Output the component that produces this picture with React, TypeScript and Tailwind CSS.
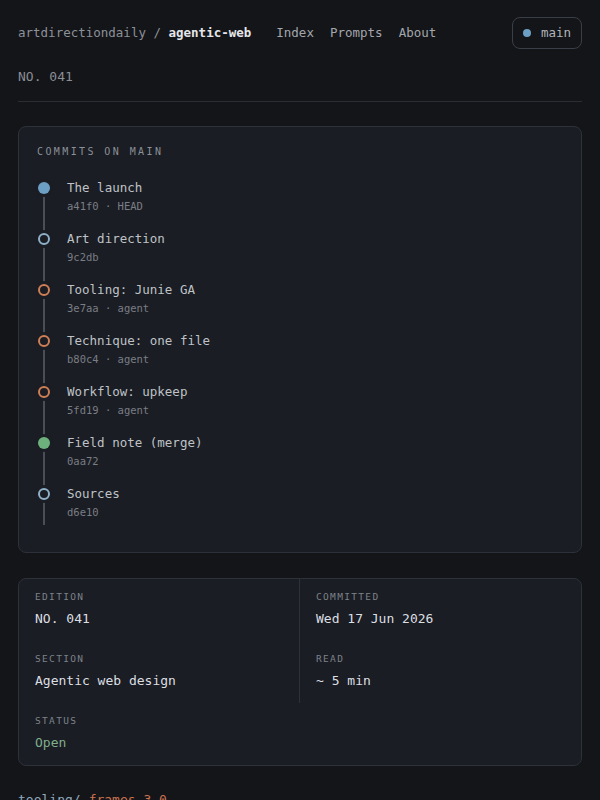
import React from "react";

const mono = { fontFamily: '"DejaVu Sans Mono", "Liberation Mono", monospace' };

type Commit = { title: string; sub: string; kind: "head" | "blue" | "orange" | "green" };

const commits: Commit[] = [
  { title: "The launch", sub: "a41f0 · HEAD", kind: "head" },
  { title: "Art direction", sub: "9c2db", kind: "blue" },
  { title: "Tooling: Junie GA", sub: "3e7aa · agent", kind: "orange" },
  { title: "Technique: one file", sub: "b80c4 · agent", kind: "orange" },
  { title: "Workflow: upkeep", sub: "5fd19 · agent", kind: "orange" },
  { title: "Field note (merge)", sub: "0aa72", kind: "green" },
  { title: "Sources", sub: "d6e10", kind: "blue" },
];

function Dot({ kind }: { kind: Commit["kind"] }) {
  if (kind === "head")
    return <div className="relative z-10 mt-[3px] h-[12px] w-[12px] shrink-0 rounded-full bg-[#6d9fc4] ring-[3px] ring-[#1a1d23]" />;
  if (kind === "green")
    return <div className="relative z-10 mt-[3px] h-[12px] w-[12px] shrink-0 rounded-full bg-[#6db27c] ring-[3px] ring-[#1a1d23]" />;
  if (kind === "orange")
    return <div className="relative z-10 mt-[3px] h-[12px] w-[12px] shrink-0 rounded-full border-2 border-[#cf7f55] bg-[#1a1d23] ring-[3px] ring-[#1a1d23]" />;
  return <div className="relative z-10 mt-[3px] h-[12px] w-[12px] shrink-0 rounded-full border-2 border-[#8fb0c8] bg-[#1a1d23] ring-[3px] ring-[#1a1d23]" />;
}

function Cell({ label, value, valueClass, border }: { label: string; value: string; valueClass?: string; border?: boolean }) {
  return (
    <div className={"px-4 pt-[12px] pb-[13px] " + (border ? "border-r border-[#2d3139]" : "")}>
      <div className="text-[9.5px] leading-[12px] tracking-[0.14em] text-[#7d828a]">{label}</div>
      <div className={"mt-[7px] text-[13px] leading-[18px] " + (valueClass ?? "text-[#dcdfe2]")}>{value}</div>
    </div>
  );
}

export default function App() {
  return (
    <div className="min-h-[800px] overflow-hidden bg-[#141519] px-[18px]" style={mono}>
      <header className="mt-[17px] flex h-[32px] items-center justify-between">
        <div className="flex items-center text-[12.5px] leading-[18px]">
          <span className="text-[#8d9198]">artdirectiondaily /</span>
          <span className="ml-[7.5px] font-bold text-[#e4e6e9]">agentic-web</span>
          <nav className="ml-[25px] flex gap-[16px] text-[#a3a7ad]">
            <span>Index</span>
            <span>Prompts</span>
            <span>About</span>
          </nav>
        </div>
        <div className="flex h-[32px] items-center gap-[10px] rounded-[8px] border border-[#3a3e46] pl-[10px] pr-[10px] text-[12.5px] text-[#b0b4ba]">
          <span className="h-[8px] w-[8px] rounded-full bg-[#6d9fc4]" />
          <span>main</span>
        </div>
      </header>

      <div className="mt-[19px] border-b border-[#2a2d33] pb-[15px] text-[13px] leading-[18px] text-[#8a8e95]">NO. 041</div>

      <section className="mt-[24px] rounded-[8px] border border-[#2d3139] bg-[#1a1d23] px-[18px] pt-[18px] pb-[16px]">
        <div className="text-[10px] leading-[14px] tracking-[0.24em] text-[#8a8f98]">COMMITS ON MAIN</div>
        <div className="mt-[20px]">
          {commits.map((c, i) => (
            <div key={c.title} className="flex gap-[16px]">
              <div className="flex w-[14px] flex-col items-center">
                <Dot kind={c.kind} />
                <div className={"w-[2px] flex-1 bg-[#4a4f57] " + (i === commits.length - 1 ? "mb-[11px]" : "-mb-[3px]")} />
              </div>
              <div className="pb-[16px]">
                <div className="text-[12.5px] leading-[18px] text-[#bfc2c7]">{c.title}</div>
                <div className="mt-[1px] text-[10.5px] leading-[16px] text-[#7a7e86]">{c.sub}</div>
              </div>
            </div>
          ))}
        </div>
      </section>

      <section className="mt-[25px] grid grid-cols-2 rounded-[8px] border border-[#2d3139] bg-[#1a1d23]">
        <Cell label="EDITION" value="NO. 041" border />
        <Cell label="COMMITTED" value="Wed 17 Jun 2026" />
        <Cell label="SECTION" value="Agentic web design" border />
        <Cell label="READ" value="~ 5 min" />
        <Cell label="STATUS" value="Open" valueClass="text-[#7fae8c]" />
      </section>

      <div className="mt-[24px] text-[13px] leading-[20px]">
        <span className="text-[#8fa9bd]">tooling/</span>
        <span className="ml-[8px] text-[#c9714f]">frames 3.0</span>
      </div>
    </div>
  );
}
